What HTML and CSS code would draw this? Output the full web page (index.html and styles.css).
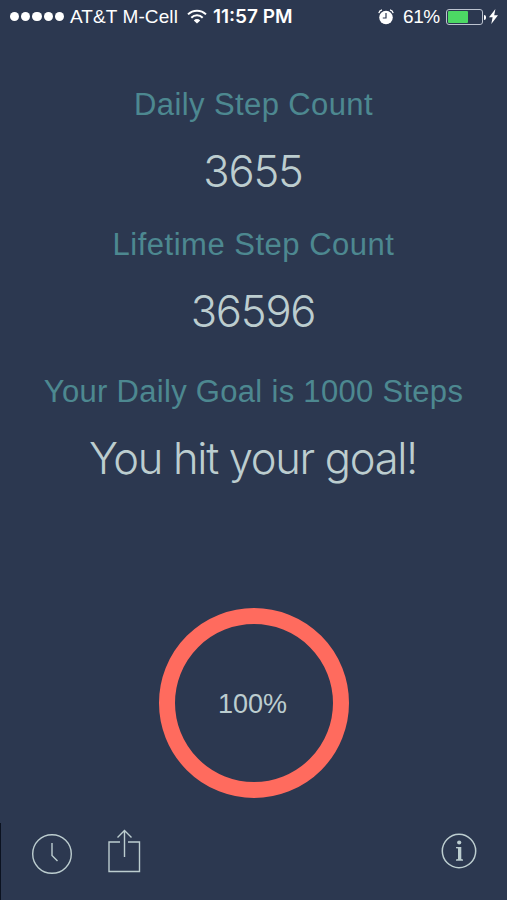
FILE: index.html
```html
<!DOCTYPE html>
<html lang="en">
<head>
  <meta charset="UTF-8" />
  <meta name="viewport" content="width=device-width, initial-scale=1.0" />
  <title>Step Counter</title>
  <link rel="stylesheet" href="styles.css">
</head>
<body>
  <div class="status-bar">
    <div class="signal"><i></i><i></i><i></i><i></i><i></i></div>
    <span class="carrier">AT&amp;T M-Cell</span>
    <svg class="wifi" width="20" height="15" viewBox="0 0 20 15" fill="none" stroke="#fff" stroke-width="2">
      <path d="M1 5.4a12.7 12.7 0 0 1 18 0" />
      <path d="M4.3 8.7a8 8 0 0 1 11.4 0" />
      <path d="M10 14.6 6.8 11.4a4.5 4.5 0 0 1 6.4 0z" fill="#fff" stroke="none" />
    </svg>
    <span class="time">11:57 PM</span>
    <svg class="alarm" width="16" height="16" viewBox="0 0 16 16" fill="none">
      <circle cx="8" cy="8.5" r="6.8" fill="#fff" />
      <path d="M.8 4.2Q1.3 1.6 4 .9M12 .9q2.7.7 3.2 3.3" stroke="#fff" stroke-width="1.2" />
      <path d="M8 4v5H4.8" stroke="#2c3850" stroke-width="1.2" />
    </svg>
    <span class="percent">61%</span>
    <div class="battery"><div class="level" style="width: 61%"></div></div>
    <svg class="bolt" width="9" height="15" viewBox="0 0 9 15">
      <path d="M6.4 0 0 8.2h3.6L2.3 15 9 6.2H5.2z" fill="#fff" />
    </svg>
  </div>

  <div class="stats">
    <div class="label daily">Daily Step Count</div>
    <div class="value">3655</div>
    <div class="label lifetime">Lifetime Step Count</div>
    <div class="value">36596</div>
    <div class="label goal">Your Daily Goal is 1000 Steps</div>
    <div class="value message">You hit your goal!</div>
  </div>

  <div class="ring"><span>100%</span></div>

  <div class="toolbar">
    <svg class="history" width="42" height="42" viewBox="0 0 42 42" fill="none" stroke="#bccdcf" stroke-width="1.4">
      <circle cx="21" cy="21" r="19.3" />
      <path d="M21 10v12.5l5.5 5.5" />
    </svg>
    <svg class="share" width="34" height="44" viewBox="0 0 34 44" fill="none" stroke="#bccdcf" stroke-width="1.4">
      <path d="M13 13H2v29.5h30.5V13H21M17.5 28V1.5M10.5 8.5l7-7 7 7" />
    </svg>
    <svg class="info" width="36" height="36" viewBox="0 0 36 36" fill="none">
      <circle cx="18" cy="18" r="16.7" stroke="#bccdcf" stroke-width="1.5" />
      <circle cx="18.2" cy="9.5" r="2.1" fill="#bccdcf" />
      <path d="M15 14h5.3v12l1.7.6v1.2H15v-1.2l2-.6V15.6l-2-.4z" fill="#bccdcf" />
    </svg>
  </div>
</body>
</html>
```

FILE: styles.css
```css
* {
  box-sizing: border-box;
}
body {
  margin: 0;
  height: 900px;
  overflow: hidden;
  background: #2c3850;
  font-family: "Liberation Sans", Arial, sans-serif;
  display: flex;
  flex-direction: column;
  align-items: center;
}
.status-bar {
  width: 100%;
  height: 33px;
  padding: 0 9px 0 10px;
  display: flex;
  align-items: center;
  color: #fff;
  font-size: 19px;
  white-space: nowrap;
}
.signal {
  display: flex;
  gap: 2px;
}
.signal i {
  width: 9.2px;
  height: 9.2px;
  border-radius: 50%;
  background: #fff;
}
.carrier {
  width: 110px;
  margin-left: 6px;
  letter-spacing: 0.1px;
}
.wifi {
  margin-left: 7px;
}
.time {
  margin-left: 6px;
  font-family: Inter, sans-serif;
  font-weight: 600;
}
.alarm {
  margin-left: auto;
}
.percent {
  width: 36px;
  margin-left: 9px;
  letter-spacing: -0.4px;
}
.battery {
  position: relative;
  width: 37px;
  height: 16px;
  margin-left: 7px;
  padding: 1px;
  border: 1px solid #bcc3cf;
  border-radius: 3px;
}
.battery::after {
  content: "";
  position: absolute;
  right: -4px;
  top: 5px;
  width: 2px;
  height: 5px;
  border-radius: 0 2px 2px 0;
  background: #fff;
}
.level {
  height: 100%;
  border-radius: 1px;
  background: #4cd964;
}
.bolt {
  margin-left: 6px;
}
.stats {
  margin-top: 51px;
  text-align: center;
  white-space: nowrap;
}
.label {
  height: 40px;
  line-height: 42px;
  font-size: 31px;
  letter-spacing: 0.4px;
  color: #4d8890;
}
.value {
  height: 50px;
  margin-top: 22px;
  line-height: 50px;
  font-family: Inter, sans-serif;
  font-size: 43.5px;
  font-weight: 260;
  letter-spacing: -1.2px;
  text-indent: -1px;
  color: #bccdcf;
}
.lifetime {
  margin-top: 28px;
  letter-spacing: 0.5px;
}
.goal {
  margin-top: 36px;
  line-height: 40px;
  letter-spacing: 0.3px;
}
.value.message {
  margin-top: 21px;
  letter-spacing: -1.3px;
}
.ring {
  width: 190px;
  height: 190px;
  margin-top: 125px;
  border: 16px solid #ff6b5e;
  border-radius: 50%;
  display: flex;
  align-items: center;
  justify-content: center;
  font-size: 27px;
  color: #bccdcf;
}
.ring span {
  padding: 2px 2px 0 0;
}
.toolbar {
  width: 100%;
  height: 77px;
  margin-top: 25px;
  padding: 0 30px;
  display: flex;
  align-items: flex-start;
  border-left: 1px solid #0b1220;
}
.history {
  margin-top: 10px;
}
.share {
  margin: 6px 0 0 34px;
}
.info {
  margin: 10px 0 0 auto;
}
```
